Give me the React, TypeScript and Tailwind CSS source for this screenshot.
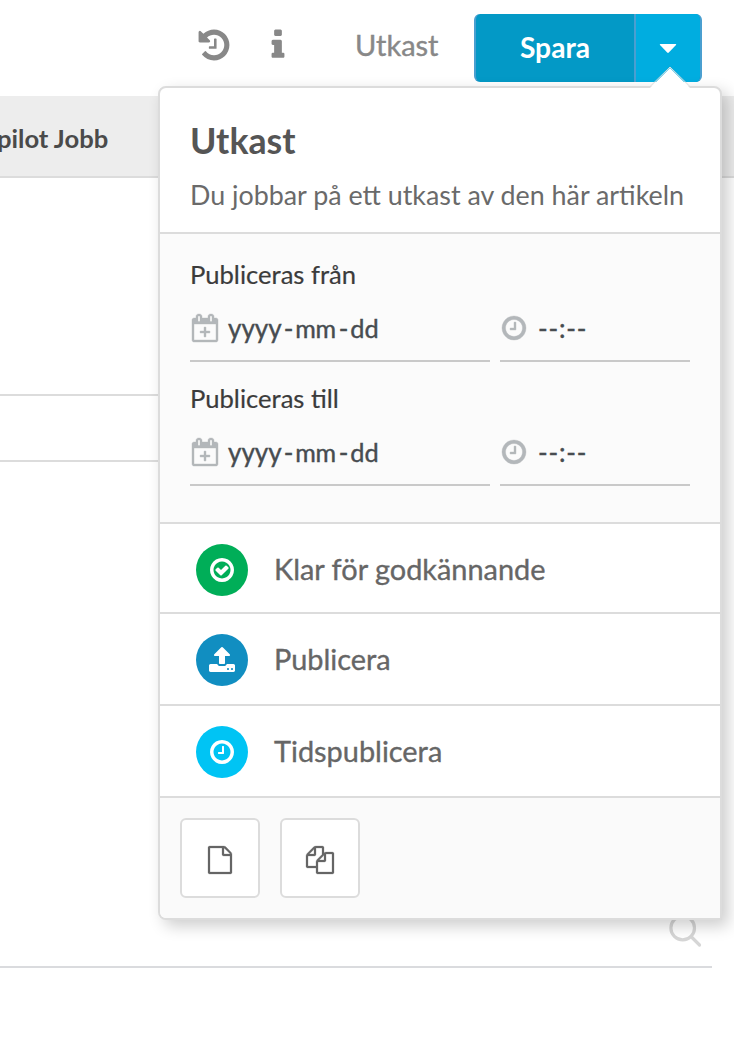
const ICONS = {
  history:
    "M1664 896q0 156-61 298t-164 245-245 164-298 61q-172 0-327-72.5t-264-204.5q-7-10-6.5-22.5t8.5-20.5l137-138q10-9 25-9 16 2 23 12 73 95 179 147t225 52q104 0 198.5-40.5t163.5-109.5 109.5-163.5 40.5-198.5-40.5-198.5-109.5-163.5-163.5-109.5-198.5-40.5q-98 0-188 35.5t-160 101.5l137 138q31 30 14 69-17 40-59 40h-448q-26 0-45-19t-19-45v-448q0-42 40-59 39-17 69 14l130 129q107-101 244.5-156.5t284.5-55.5q156 0 298 61t245 164 164 245 61 298zm-640-288v448q0 14-9 23t-23 9h-320q-14 0-23-9t-9-23v-64q0-14 9-23t23-9h224v-352q0-14 9-23t23-9h64q14 0 23 9t9 23z",
  info:
    "M1216 1344v128q0 26-19 45t-45 19h-512q-26 0-45-19t-19-45v-128q0-26 19-45t45-19h64v-384h-64q-26 0-45-19t-19-45v-128q0-26 19-45t45-19h384q26 0 45 19t19 45v576h64q26 0 45 19t19 45zm-128-1152v192q0 26-19 45t-45 19h-256q-26 0-45-19t-19-45v-192q0-26 19-45t45-19h256q26 0 45 19t19 45z",
  clock:
    "M1024 544v448q0 14-9 23t-23 9h-320q-14 0-23-9t-9-23v-64q0-14 9-23t23-9h224v-352q0-14 9-23t23-9h64q14 0 23 9t9 23zm416 352q0-148-73-273t-198-198-273-73-273 73-198 198-73 273 73 273 198 198 273 73 273-73 198-198 73-273zm224 0q0 209-103 385.5t-279.5 279.5-385.5 103-385.5-103-279.5-279.5-103-385.5 103-385.5 279.5-279.5 385.5-103 385.5 103 279.5 279.5 103 385.5z",
  check:
    "M1299 813l-422 422q-19 19-45 19t-45-19l-294-294q-19-19-19-45t19-45l102-102q19-19 45-19t45 19l147 147 275-275q19-19 45-19t45 19l102 102q19 19 19 45t-19 45zm141 83q0-148-73-273t-198-198-273-73-273 73-198 198-73 273 73 273 198 198 273 73 273-73 198-198 73-273zm224 0q0 209-103 385.5t-279.5 279.5-385.5 103-385.5-103-279.5-279.5-103-385.5 103-385.5 279.5-279.5 385.5-103 385.5 103 279.5 279.5 103 385.5z",
  upload:
    "M1344 1472q0-26-19-45t-45-19-45 19-19 45 19 45 45 19 45-19 19-45zm256 0q0-26-19-45t-45-19-45 19-19 45 19 45 45 19 45-19 19-45zm128-224v320q0 40-28 68t-68 28h-1472q-40 0-68-28t-28-68v-320q0-40 28-68t68-28h427q21 56 70.5 92t110.5 36h256q61 0 110.5-36t70.5-92h427q40 0 68 28t28 68zm-325-648q-17 40-59 40h-256v448q0 26-19 45t-45 19h-256q-26 0-45-19t-19-45v-448h-256q-42 0-59-40-17-39 14-70l448-448q18-19 45-19t45 19l448 448q31 31 14 70z",
  calendar:
    "M1600 256q52 0 90 38t38 90v1280q0 52-38 90t-90 38h-1408q-52 0-90-38t-38-90v-1280q0-52 38-90t90-38h128v-96q0-66 47-113t113-47h64q66 0 113 47t47 113v96h384v-96q0-66 47-113t113-47h64q66 0 113 47t47 113v96h128zm-384-96v288q0 14 9 23t23 9h64q14 0 23-9t9-23v-288q0-14-9-23t-23-9h-64q-14 0-23 9t-9 23zm-768 0v288q0 14 9 23t23 9h64q14 0 23-9t9-23v-288q0-14-9-23t-23-9h-64q-14 0-23 9t-9 23zm1152 1504v-1024h-1408v1024h1408zm-640-576h224q14 0 23 9t9 23v64q0 14-9 23t-23 9h-224v224q0 14-9 23t-23 9h-64q-14 0-23-9t-9-23v-224h-224q-14 0-23-9t-9-23v-64q0-14 9-23t23-9h224v-224q0-14 9-23t23-9h64q14 0 23 9t9 23v224z",
  file:
    "M1596 380q28 28 48 76t20 88v1152q0 40-28 68t-68 28h-1344q-40 0-68-28t-28-68v-1600q0-40 28-68t68-28h896q40 0 88 20t76 48zm-444-244v376h376q-10-29-22-41l-313-313q-12-12-41-22zm384 1528v-1024h-416q-40 0-68-28t-28-68v-416h-768v1536h1280z",
  files:
    "M1696 384q40 0 68 28t28 68v1216q0 40-28 68t-68 28h-960q-40 0-68-28t-28-68v-288h-544q-40 0-68-28t-28-68v-672q0-40 20-88t48-76l408-408q28-28 76-48t88-20h416q40 0 68 28t28 68v328q68-40 128-40h416zm-544 213l-299 299h299v-299zm-640-384l-299 299h299v-299zm196 647l316-316v-416h-384v416q0 40-28 68t-68 28h-416v640h512v-256q0-40 20-88t48-76zm956 804v-1152h-384v416q0 40-28 68t-68 28h-416v640h896z",
};

type IconName = keyof typeof ICONS;

function Icon({ name, className }: { name: IconName; className: string }) {
  return (
    <svg viewBox="0 0 1792 1792" fill="currentColor" className={`shrink-0 overflow-visible ${className}`}>
      <path d={ICONS[name]} />
    </svg>
  );
}

const ACTIONS: { label: string; icon: IconName; color: string; row: string }[] = [
  { label: "Klar för godkännande", icon: "check", color: "bg-[#00ae58]", row: "h-[90px] pt-[4px]" },
  { label: "Publicera", icon: "upload", color: "bg-[#118ec1]", row: "h-[92px] pt-[2px]" },
  { label: "Tidspublicera", icon: "clock", color: "bg-[#00c4f4]", row: "h-[92px] pt-[2px]" },
];

function ScheduleRow({ label }: { label: string }) {
  return (
    <div className="h-[124px]">
      <p className="text-[25.6px] leading-[32px] text-[#3b3b3b] [-webkit-text-stroke:0.2px]">{label}</p>
      <div className="mt-[9px] flex gap-[10px] text-[26px] text-[#474c50]">
        <div className="flex h-[63px] w-[300px] items-center border-b-2 border-[#c9c9c9] pb-1">
          <Icon name="calendar" className="ml-[1px] h-7 w-7 stroke-current text-[#b3b7ba] [stroke-width:24]" />
          <span className="mt-[2px] ml-[9px] flex [-webkit-text-stroke:0.4px]">
            <span>yyyy</span>
            <span className="mr-[2px] ml-[2px]">-</span>
            <span className="text-[25px] leading-[39px] tracking-[-0.4px]">mm</span>
            <span className="mr-[2px] ml-[3px]">-</span>
            <span className="text-[25.4px] leading-[39px]">dd</span>
          </span>
        </div>
        <div className="flex h-[63px] w-[190px] items-center border-b-2 border-[#c9c9c9] pb-1">
          <Icon name="clock" className="h-7 w-7 stroke-current text-[#b3b7ba] [stroke-width:24]" />
          <span className="mt-[2px] ml-[10px] tracking-[0.8px] [-webkit-text-stroke:0.4px]">--:--</span>
        </div>
      </div>
    </div>
  );
}

function PublishMenu() {
  return (
    <div className="absolute top-[86px] left-[158px] w-[564px] rounded-lg rounded-br-none border-2 border-[#dcdcdc] bg-white shadow-[6px_6px_16px_rgba(0,0,0,0.2)]">
      {/* Arrow towards the dropdown button */}
      <svg className="absolute -top-[22px] left-[489px]" width="42" height="23" viewBox="0 0 42 23">
        <path d="M1 22L21 2L41 22V23H1Z" fill="#fff" />
        <path d="M0 21.5L21 1L42 21.5" fill="none" stroke="#dcdcdc" strokeWidth="1" />
      </svg>

      <div className="h-[146px] border-b-2 border-[#dcdcdc] px-[30px] pt-[30px]">
        <h2 className="text-[35.7px] leading-[46px] font-bold text-[#555]">Utkast</h2>
        <p className="mt-[13px] text-[26.85px] leading-9 whitespace-nowrap text-[#6a6a6a]">
          Du jobbar på ett utkast av den här artikeln
        </p>
      </div>

      <div className="h-[290px] border-b-2 border-[#dcdcdc] bg-[#fbfbfb] px-[30px] pt-6">
        <ScheduleRow label="Publiceras från" />
        <ScheduleRow label="Publiceras till" />
      </div>

      {ACTIONS.map(({ label, icon, color, row }) => (
        <button
          key={label}
          className={`flex w-full items-center border-b-2 border-[#dcdcdc] pl-9 text-left ${row}`}
        >
          <span className={`flex h-[51.5px] w-[52px] items-center justify-center rounded-full text-white ${color}`}>
            <Icon name={icon} className="h-7 w-7" />
          </span>
          <span className="mb-[2px] ml-[26px] text-[28.9px] text-[#666] [-webkit-text-stroke:0.35px]">{label}</span>
        </button>
      ))}

      <div className="flex h-[120px] gap-5 rounded-bl-md bg-[#fafafa] p-5 text-[#666]">
        <button className="flex h-20 w-20 items-center justify-center rounded-md border-2 border-[#dcdcdc] bg-white pt-[3px] [stroke-width:16] stroke-current">
          <Icon name="file" className="h-7 w-7" />
        </button>
        <button className="flex h-20 w-20 items-center justify-center rounded-md border-2 border-[#dcdcdc] bg-white pt-[3px] [stroke-width:16] stroke-current">
          <Icon name="files" className="h-7 w-7" />
        </button>
      </div>
    </div>
  );
}

export default function App() {
  return (
    <div className="relative h-[1056px] w-[734px] overflow-hidden bg-white font-['Lato',sans-serif]">
      {/* Toolbar */}
      <header className="flex h-24 items-start">
        <Icon name="history" className="mt-[27px] ml-[196px] h-9 w-9 text-[#888]" />
        <Icon name="info" className="mt-[27px] ml-7 h-9 w-9 text-[#888]" />
        <span className="mt-[27px] ml-[59px] w-[119px] text-[29px] leading-9 text-[#888] [-webkit-text-stroke:0.4px]">
          Utkast
        </span>
        <div className="mt-[14px] flex h-[68px] w-[228px] overflow-hidden rounded-md border-x-2 border-[#4a9fd0] bg-[#0399c6]">
          <button className="w-[158px] pb-[1px] text-[28.2px] font-bold text-white">Spara</button>
          <button className="flex flex-1 items-center justify-center border-l-2 border-[#4a9fd0] bg-[#00ade0]">
            <svg width="18" height="11" viewBox="0 0 18 11" fill="#fff">
              <path d="M1.5 1H16.5Q17.8 1 17 2L9.8 9.5Q9 10.3 8.2 9.5L1 2Q.2 1 1.5 1Z" />
            </svg>
          </button>
        </div>
      </header>

      {/* Article context */}
      <div className="h-[82px] border-b-2 border-[#dcdcdc] bg-[#ededed] pt-[26px]">
        <span className="-ml-[3px] text-[25.6px] leading-8 font-bold whitespace-nowrap text-[#4a4a4a]">pilot Jobb</span>
      </div>

      {/* Editor fields */}
      <div className="h-[218px] w-[712px] border-b-2 border-[#dcdcdc]" />
      <div className="h-[66px] w-[712px] border-b-2 border-[#dcdcdc]" />
      <div className="flex h-[506px] w-[712px] items-end justify-end border-b-2 border-[#dadbde] pr-[10px] pb-[18px]">
        <svg width="34" height="34" viewBox="0 0 34 34" fill="none" stroke="#d6d6d6" strokeWidth="3.2">
          <circle cx="14.7" cy="14" r="11.8" />
          <path d="M23 22.5L31.5 31" strokeLinecap="round" />
        </svg>
      </div>

      <PublishMenu />
    </div>
  );
}
